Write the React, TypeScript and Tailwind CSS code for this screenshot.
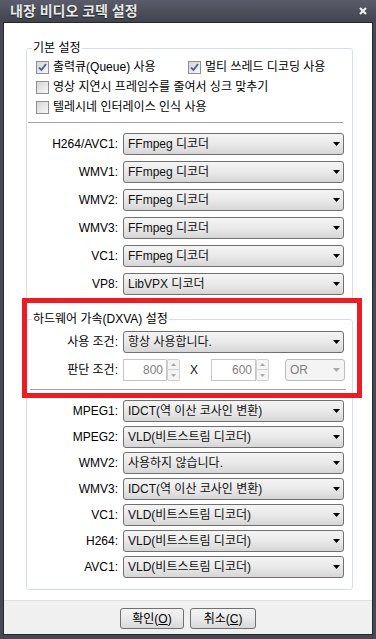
import React from 'react';

const font = "font-['Liberation_Sans','Noto_Sans_CJK_KR',sans-serif]";

const codecRows = [
  ['H264/AVC1:', 'FFmpeg 디코더'],
  ['WMV1:', 'FFmpeg 디코더'],
  ['WMV2:', 'FFmpeg 디코더'],
  ['WMV3:', 'FFmpeg 디코더'],
  ['VC1:', 'FFmpeg 디코더'],
  ['VP8:', 'LibVPX 디코더'],
];

const dxvaRows = [
  ['MPEG1:', 'IDCT(역 이산 코사인 변환)'],
  ['MPEG2:', 'VLD(비트스트림 디코더)'],
  ['WMV2:', '사용하지 않습니다.'],
  ['WMV3:', 'IDCT(역 이산 코사인 변환)'],
  ['VC1:', 'VLD(비트스트림 디코더)'],
  ['H264:', 'VLD(비트스트림 디코더)'],
  ['AVC1:', 'VLD(비트스트림 디코더)'],
];

function Arrow({ color = '#000' }: { color?: string }) {
  return (
    <svg width="7" height="4" viewBox="0 0 7 4" className="shrink-0">
      <path d="M0 0h7L3.5 4z" fill={color} />
    </svg>
  );
}

function Combo({ value }: { value: string }) {
  return (
    <div className="flex h-[22px] w-[221px] items-center justify-between rounded-[3px] border border-[#707070] bg-linear-to-b from-[#f4f4f4] via-[#e9e9e9] to-[#d6d6d6] pl-[4px] pr-[3px] text-[12px] text-[#111]">
      <span className="whitespace-nowrap">{value}</span>
      <Arrow />
    </div>
  );
}

function Check({ checked, label, className = '' }: { checked?: boolean; label: string; className?: string }) {
  return (
    <div className={`flex h-[20px] items-center ${className}`}>
      <div className="flex h-[13px] w-[13px] items-center justify-center border border-[#8f8f8f] bg-linear-to-br from-[#d6d6d6] to-[#f7f7f7]">
        {checked && (
          <svg width="9" height="9" viewBox="0 0 9 9">
            <path d="M1 4.5l2.5 2.5L8 1" fill="none" stroke="#4a5d95" strokeWidth="1.8" />
          </svg>
        )}
      </div>
      <span className="ml-[4px] whitespace-nowrap text-[12px] text-black">{label}</span>
    </div>
  );
}

function Row({ label, children, className = '' }: { label: string; children: React.ReactNode; className?: string }) {
  return (
    <div className={`flex h-[22px] items-center ${className}`}>
      <div className="w-[91px] whitespace-nowrap text-right text-[12px] text-black">{label}</div>
      <div className="ml-[5px] flex items-center">{children}</div>
    </div>
  );
}

function Spin({ value, width }: { value: string; width: string }) {
  return (
    <div className="flex h-[22px] items-stretch">
      <div className={`${width} flex items-center justify-end border border-[#c5c5c5] bg-white pr-[3px] text-[12px] text-[#7f7f7f]`}>
        {value}
      </div>
      <div className="flex w-[13px] flex-col">
        <div className="flex h-[11px] items-center justify-center rounded-t-[2px] border border-[#d0d0d0] bg-[#f4f4f4]">
          <svg width="5" height="3" viewBox="0 0 5 3">
            <path d="M0 3h5L2.5 0z" fill="#a8a8a8" />
          </svg>
        </div>
        <div className="flex h-[11px] items-center justify-center rounded-b-[2px] border border-t-0 border-[#d0d0d0] bg-[#f4f4f4]">
          <svg width="5" height="3" viewBox="0 0 5 3">
            <path d="M0 0h5L2.5 3z" fill="#a8a8a8" />
          </svg>
        </div>
      </div>
    </div>
  );
}

export default function App() {
  return (
    <div className={`flex h-[639px] w-[376px] flex-col bg-[#464955] ${font}`}>
      {/* title bar */}
      <div className="flex h-[22px] items-center justify-between bg-linear-to-b from-[#5a5d69] to-[#41444f] pl-[10px] pr-[9px]">
        <span className="text-[14px] font-bold leading-[16px] text-[#e8e8e8] [text-shadow:0_1px_1px_#222]">내장 비디오 코덱 설정</span>
        <svg width="8" height="8" viewBox="0 0 8 8">
          <path d="M1 1l6 6M7 1L1 7" stroke="#f0f0f0" strokeWidth="2.2" />
        </svg>
      </div>

      <div className="mx-[3px] flex flex-1 flex-col border border-[#26272c]">
        <div className="relative flex flex-1 flex-col bg-white pt-[17px]">
          <fieldset className="ml-[22px] mr-[19px] rounded-[3px] border border-[#d5dfe5] pb-[4px]">
            <legend className="ml-[5px] px-[1px] text-[12px] leading-[16px] text-black">기본 설정</legend>
            <div className="mt-[1px] pl-[9px]">
              <div className="flex">
                <Check checked label="출력큐(Queue) 사용" className="w-[152px]" />
                <Check checked label="멀티 쓰레드 디코딩 사용" />
              </div>
              <Check label="영상 지연시 프레임수를 줄여서 싱크 맞추기" />
              <Check label="텔레시네 인터레이스 인식 사용" />
            </div>
            <div className="ml-[1px] mt-[5px] h-px w-[315px] bg-[#a0a0a0]" />
            <div className="mt-[10px] flex flex-col gap-[6px]">
              {codecRows.map(([l, v]) => (
                <Row key={l} label={l}>
                  <Combo value={v} />
                </Row>
              ))}
            </div>
          </fieldset>

          <fieldset className="ml-[22px] mr-[19px] mt-[11px] rounded-[3px] border border-[#d5dfe5] pb-[11px]">
            <legend className="ml-[5px] px-[1px] text-[12px] leading-[16px] text-black">하드웨어 가속(DXVA) 설정</legend>
            <Row label="사용 조건:" className="mt-[4px]">
              <Combo value="항상 사용합니다." />
            </Row>
            <Row label="판단 조건:" className="mt-[6px]">
              <Spin value="800" width="w-[44px]" />
              <span className="ml-[10px] text-[12px] text-[#111]">X</span>
              <div className="ml-[13px]">
                <Spin value="600" width="w-[45px]" />
              </div>
              <div className="ml-[16px] flex h-[22px] w-[60px] items-center justify-between rounded-[3px] border border-[#b8bcbf] bg-[#f4f4f4] pl-[4px] pr-[4px] text-[12px] text-[#7f7f7f]">
                <span>OR</span>
                <Arrow color="#a8a8a8" />
              </div>
            </Row>
            <div className="ml-[3px] mt-[8px] h-px w-[316px] bg-[#a0a0a0]" />
            <div className="mt-[10px] flex flex-col gap-[4px]">
              {dxvaRows.map(([l, v]) => (
                <Row key={l} label={l}>
                  <Combo value={v} />
                </Row>
              ))}
            </div>
          </fieldset>

          {/* red annotation frame */}
          <div className="pointer-events-none absolute left-[18px] top-[275px] h-[100px] w-[340px] border-[5px] border-[#ed1c24]" />
        </div>

        <div className="flex h-[34px] justify-center gap-[6px] border-t border-[#dfdfdf] bg-[#f0f0f0] pt-[7px]">
          <button className="flex h-[21px] w-[64px] items-center justify-center rounded-[3px] border border-[#707070] bg-linear-to-b from-[#f4f4f4] via-[#e9e9e9] to-[#d8d8d8] text-[12px] text-black">
            확인(<span className="underline">O</span>)
          </button>
          <button className="flex h-[21px] w-[66px] items-center justify-center rounded-[3px] border border-[#707070] bg-linear-to-b from-[#f4f4f4] via-[#e9e9e9] to-[#d8d8d8] text-[12px] text-black">
            취소(<span className="underline">C</span>)
          </button>
        </div>
      </div>
      <div className="h-[4px]" />
    </div>
  );
}
